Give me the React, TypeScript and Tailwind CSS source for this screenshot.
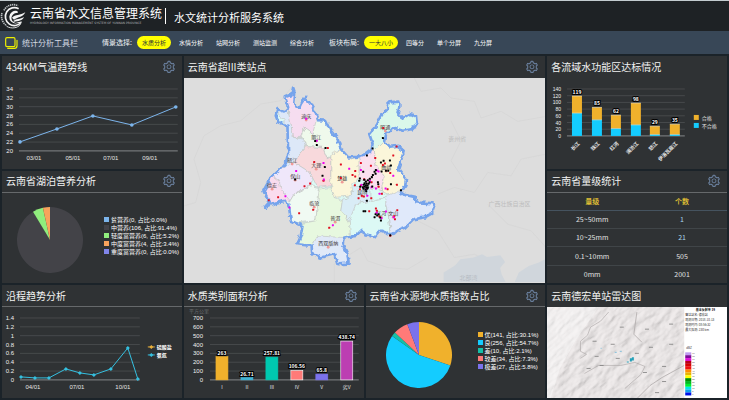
import { ReactNode } from 'react';
import { clsx } from 'clsx';
import { AiOutlineSetting } from 'react-icons/ai';

type Point = [number, number];

const analysisTabs = ['水质分析', '水情分析', '站网分析', '测站监测', '综合分析'];
const layoutTabs = ['一大八小', '四等分', '单个分屏', '九分屏'];

const lakeNutrition = [
  { label: '贫营养(0, 占比:0.0%)', value: 0, color: '#7cb5ec' },
  { label: '中营养(106, 占比:91.4%)', value: 106, color: '#434348' },
  { label: '轻度富营养(6, 占比:5.2%)', value: 6, color: '#90ed7d' },
  { label: '中度富营养(4, 占比:3.4%)', value: 4, color: '#f7a35c' },
  { label: '重度富营养(0, 占比:0.0%)', value: 0, color: '#8085e9' },
];

const waterSource = [
  { label: '优(141, 占比:30.1%)', value: 141, color: '#f0b12c' },
  { label: '良(256, 占比:54.7%)', value: 256, color: '#14ccff' },
  { label: '差(10, 占比:2.1%)', value: 10, color: '#14c0a8' },
  { label: '较差(34, 占比:7.3%)', value: 34, color: '#ff7a78' },
  { label: '极差(27, 占比:5.8%)', value: 27, color: '#7b72ec' },
];

const areaBars = [
  { label: 'I', value: 263, color: '#f0b12c', edge: '#f0b12c' },
  { label: 'II', value: 26.71, color: '#3fb4d6', edge: '#3fb4d6' },
  { label: 'III', value: 257.81, color: '#00c8b0', edge: '#00c8b0' },
  { label: 'IV', value: 106.56, color: '#ff7a78', edge: '#ffffff' },
  { label: 'V', value: 65.8, color: '#7b72ec', edge: '#7b72ec' },
  { label: '劣V', value: 438.74, color: '#bc3eb2', edge: '#ffffff' },
];

const basinBars = [
  { label: '长江', total: 119, fail: 68 },
  { label: '珠江', total: 85, fail: 48 },
  { label: '红河', total: 62, fail: 22 },
  { label: '澜沧江', total: 98, fail: 33 },
  { label: '怒江', total: 29, fail: 4 },
  { label: '伊洛瓦底江', total: 35, fail: 4 },
];

const rainRows = [
  { level: '25~50mm', count: 1, blue: true },
  { level: '10~25mm', count: 21, blue: true },
  { level: '0.1~10mm', count: 505, blue: false },
  { level: '0mm', count: 2001, blue: false },
];

function Panel({ title, gear, line, className, children }: {
  title: string;
  gear?: boolean;
  line?: boolean;
  className?: string;
  children: ReactNode;
}) {
  return (
    <section className={clsx('flex min-w-0 flex-col bg-[#2f3234]', className)}>
      <header className={clsx('flex h-[22px] shrink-0 items-center justify-between border-b pl-1 pr-[6px]', line ? 'border-[#66696b]' : 'border-transparent')}>
        <h2 className="whitespace-nowrap text-[10px] leading-none text-[#f2f2f2]">{title}</h2>
        {gear && (
          <button aria-label="设置" className="text-[#6d84a3]">
            <AiOutlineSetting className="size-[14px]" />
          </button>
        )}
      </header>
      {children}
    </section>
  );
}

function TabGroup({ label, tabs }: { label: string; tabs: string[] }) {
  return (
    <div className="flex items-center">
      <span className="mr-[5px] whitespace-nowrap text-[7px] text-[#eef1f4]">{label}</span>
      <div className="flex gap-[3px]">
        {tabs.map((tab, i) => (
          <button
            key={tab}
            className={clsx('h-[13px] whitespace-nowrap rounded-full px-[5px] text-[6px] leading-none', i === 0 ? 'bg-[#ffff00] text-[#2b3036]' : 'text-white')}
          >
            {tab}
          </button>
        ))}
      </div>
    </div>
  );
}

function Grid({ labels, labelX, x1, x2, top, bottom, dense }: {
  labels: string[];
  labelX: number;
  x1: number;
  x2: number;
  top: number;
  bottom: number;
  dense?: boolean;
}) {
  const step = (bottom - top) / (labels.length - 1);
  return (
    <g>
      {labels.map((label, i) => (
        <g key={label}>
          <line x1={x1} x2={x2} y1={top + i * step} y2={top + i * step} stroke={i === labels.length - 1 ? '#85888a' : '#46494b'} strokeWidth="1" />
          <text
            x={labelX}
            y={top + i * step + 2}
            textAnchor="end"
            className={clsx("fill-[#f0f0f0] font-['Liberation_Sans',sans-serif]", dense ? 'text-[5px]' : 'text-[6px]')}
          >
            {label}
          </text>
        </g>
      ))}
    </g>
  );
}

function TempChart() {
  const points: Point[] = [[18, 64], [55, 51], [91, 38], [130, 47], [174, 29]];
  const months = [{ t: '03/01', x: 32 }, { t: '05/01', x: 71 }, { t: '07/01', x: 109 }, { t: '09/01', x: 148 }];
  return (
    <svg viewBox="0 0 180 90" className="block w-full">
      <Grid labels={['34', '32', '30', '28', '26', '24', '22', '20']} labelX={11} x1={17} x2={176} top={11} bottom={73} />
      <polyline points={points.join(' ')} fill="none" stroke="#7cb5ec" strokeWidth="1" />
      {points.map(([x, y]) => <circle key={x} cx={x} cy={y} r="1.8" fill="#7cb5ec" />)}
      {months.map((m) => <text key={m.t} x={m.x} y="82" textAnchor="middle" className="fill-[#e6e6e6] font-['Liberation_Sans',sans-serif] text-[6px]">{m.t}</text>)}
    </svg>
  );
}

function TrendChart() {
  const points: Point[] = [[19, 70], [33, 71], [47, 71], [64, 62], [78, 66], [92, 68], [109, 62], [126, 41], [136, 72]];
  const months = [{ t: '04/01', x: 31 }, { t: '07/01', x: 75 }, { t: '10/01', x: 121 }];
  const legend = [{ t: '硫酸盐', y: 40, color: '#e8b03c' }, { t: '氨氮', y: 48, color: '#35c0e0' }];
  return (
    <svg viewBox="0 0 180 90" className="block w-full">
      <Grid labels={['1.4', '1.2', '1', '0.8', '0.6', '0.4', '0.2', '0']} labelX={12} x1={18} x2={138} top={11} bottom={73} />
      <polyline points={points.join(' ')} fill="none" stroke="#35c0e0" strokeWidth="1" />
      {points.map(([x, y]) => <path key={x} d={`M${x - 2} ${y}l2-2 2 2-2 2z`} fill="#35c0e0" />)}
      {months.map((m) => <text key={m.t} x={m.x} y="82" textAnchor="middle" className="fill-[#e6e6e6] font-['Liberation_Sans',sans-serif] text-[6px]">{m.t}</text>)}
      {legend.map((l) => (
        <g key={l.t}>
          <path d={`M146 ${l.y}h7`} stroke={l.color} />
          <path d={`M147.500 ${l.y}l2-2 2 2-2 2z`} fill={l.color} />
          <text x="155" y={l.y + 2} className="fill-white text-[5px] font-bold">{l.t}</text>
        </g>
      ))}
    </svg>
  );
}

function AreaChart() {
  const base = 73;
  return (
    <svg viewBox="0 0 180 90" className="block w-full">
      <text x="5" y="6" className="fill-[#66696b] text-[5px]">平方公里</text>
      <Grid labels={['700', '600', '500', '400', '300', '200', '100', '0']} labelX={19} x1={26} x2={175} top={11} bottom={base} />
      {areaBars.map((bar, i) => {
        const h = (bar.value / 700) * 62;
        const x = 32 + i * 25;
        return (
          <g key={bar.label}>
            <rect x={x} y={base - h} width="12" height={h} fill={bar.color} stroke={bar.edge} strokeWidth="0.6" />
            <text x={x + 6} y={base - h - 2} textAnchor="middle" stroke="#000" strokeWidth="2" paintOrder="stroke" className="fill-white text-[5px] font-bold">{bar.value}</text>
            <text x={x + 6} y="82" textAnchor="middle" className="fill-[#e6e6e6] text-[5px]">{bar.label}</text>
          </g>
        );
      })}
    </svg>
  );
}

function BasinChart() {
  const base = 58;
  const scale = 47 / 140;
  return (
    <svg viewBox="0 0 180 90" className="block w-full">
      <Grid dense labels={['140', '120', '100', '80', '60', '40', '20', '0']} labelX={14} x1={20} x2={138} top={11} bottom={base} />
      {basinBars.map((bar, i) => {
        const x = 25 + Math.round(i * 19.6);
        const top = base - bar.total * scale;
        const split = base - bar.fail * scale;
        return (
          <g key={bar.label}>
            <rect x={x} y={top} width="10" height={split - top} fill="#f0b12c" />
            <rect x={x} y={split} width="10" height={base - split} fill="#14ccff" />
            <path d={`M${x} ${split}h10M${x} ${top}h10`} stroke="#f4e9c8" strokeWidth="0.6" />
            <text x={x + 5} y={top - 2} textAnchor="middle" stroke="#000" strokeWidth="2" paintOrder="stroke" className="fill-white text-[5px] font-bold">{bar.total}</text>
            <text transform={`translate(${x + 8} 66) rotate(-45)`} textAnchor="end" className="fill-[#e6e6e6] text-[5px] font-bold">{bar.label}</text>
          </g>
        );
      })}
      <rect x="147" y="37" width="5" height="5" fill="#f0b12c" />
      <text x="155" y="42" className="fill-[#e6e6e6] text-[5px]">合格</text>
      <rect x="147" y="45" width="5" height="5" fill="#14ccff" />
      <text x="155" y="50" className="fill-[#e6e6e6] text-[5px]">不合格</text>
    </svg>
  );
}

function Pie({ data, className }: { data: typeof waterSource; className: string }) {
  const total = data.reduce((sum, d) => sum + d.value, 0);
  let angle = 0;
  const slices = data.filter((d) => d.value > 0).map((d) => {
    const start = angle;
    angle += (d.value / total) * Math.PI * 2;
    const p = (a: number) => `${33 + 33 * Math.sin(a)} ${33 - 33 * Math.cos(a)}`;
    return { color: d.color, path: `M33 33L${p(start)}A33 33 0 ${angle - start > Math.PI ? 1 : 0} 1 ${p(angle)}Z` };
  });
  return (
    <div className={clsx('flex flex-1 items-center pt-1', className)}>
      <svg viewBox="0 0 66 66" className="w-[66px] shrink-0">
        {slices.map((s) => <path key={s.color} d={s.path} fill={s.color} />)}
      </svg>
      <ul className="-mt-2">
        {data.map((d) => (
          <li key={d.label} className="flex h-2 items-center gap-[2px]">
            <svg viewBox="0 0 5 5" className="size-[5px] shrink-0"><rect width="5" height="5" fill={d.color} /></svg>
            <span className="whitespace-nowrap font-['Liberation_Sans','Noto_Sans_CJK_SC',sans-serif] text-[6px] leading-none text-white">{d.label}</span>
          </li>
        ))}
      </ul>
    </div>
  );
}

// prefecture shapes overlap the border and are cut by the province outline
const province =
  '327,101 333,118 330,150 345,162 350,150 362,132 380,150 392,172 402,198 425,200 440,230 460,255 470,285 492,310 520,308 545,300 562,287 565,268 555,240 575,215 590,185 610,165 612,145 645,143 645,160 640,178 655,192 675,180 695,185 697,205 685,225 655,230 630,222 605,240 602,268 620,278 640,275 658,290 650,320 642,345 665,375 663,395 650,415 660,422 690,428 700,445 745,447 750,460 742,478 720,490 690,495 665,520 640,530 625,540 610,540 598,530 585,530 570,548 545,540 530,530 515,545 480,550 475,570 490,600 493,628 460,630 450,600 430,605 410,610 385,600 382,575 340,570 350,545 355,515 320,500 315,460 305,440 275,445 243,458 255,445 238,410 260,370 285,350 305,325 312,300 310,215 283,205 275,185 280,165 300,172 312,160 302,130 322,122';

const prefectures = [
  { color: '#f6ddf0', points: '300,90 345,90 385,130 400,200 385,240 360,220 350,250 328,250 315,190' },
  { color: '#dde8f8', points: '265,150 310,160 328,250 358,255 365,275 345,300 330,340 290,350 300,200' },
  { color: '#eff9ec', points: '400,185 470,230 490,300 440,300 430,315 415,280 365,278 358,255 350,250 360,220 385,240' },
  { color: '#f8d9dc', points: '365,278 415,280 430,315 440,305 440,395 400,400 385,370 370,350 330,325 345,300' },
  { color: '#efe7fa', points: '330,325 370,350 385,370 380,395 330,420 318,440 290,450 285,380 255,360' },
  { color: '#fadcee', points: '230,380 265,365 285,380 290,405 318,440 230,470' },
  { color: '#f0faf3', points: '318,440 330,420 380,395 405,400 410,430 400,460 395,500 300,510 300,440' },
  { color: '#fbf6da', points: '440,300 475,285 500,315 525,305 525,370 500,395 505,425 450,430 440,390' },
  { color: '#e7f8df', points: '405,405 440,400 450,430 475,440 470,470 495,500 505,530 480,560 400,545 380,575 330,580 340,510 395,500' },
  { color: '#e0e9f8', points: '380,575 400,545 475,550 510,640 370,630' },
  { color: '#fae0ee', points: '525,290 570,285 575,330 600,370 590,410 560,400 540,380 525,370' },
  { color: '#d9ecf6', points: '475,435 505,425 505,395 560,400 560,440 520,450 515,490 495,500 470,470' },
  { color: '#dcf9f5', points: '515,450 560,440 600,430 610,460 620,560 500,560 495,500' },
  { color: '#fbf6da', points: '570,285 600,240 680,260 680,420 620,425 590,410 600,370 575,330' },
  { color: '#e0e9fa', points: '600,430 650,410 770,420 770,510 620,555 610,460' },
  { color: '#dbf8ea', points: '540,220 600,130 720,160 710,240 605,240 600,260 570,290 550,280' },
];

const cities = [
  { t: '迪庆', x: 122, y: 40 },
  { t: '丽江', x: 132, y: 61 },
  { t: '怒江', x: 108, y: 84 },
  { t: '大理', x: 132, y: 89 },
  { t: '保山', x: 111, y: 100 },
  { t: '德宏', x: 88, y: 109 },
  { t: '楚雄', x: 158, y: 102 },
  { t: '昆明', x: 178, y: 116 },
  { t: '临沧', x: 130, y: 127 },
  { t: '普洱', x: 151, y: 142 },
  { t: '西双版纳', x: 144, y: 167 },
  { t: '昭通', x: 201, y: 51 },
  { t: '曲靖', x: 202, y: 91 },
  { t: '红河', x: 197, y: 137 },
  { t: '文山', x: 209, y: 137 },
];

const stations: { color: string; points: Point[] }[] = [
  {
    color: '#e01020',
    points: [[431, 282], [390, 324], [470, 331], [378, 388], [361, 396], [418, 380], [282, 429], [254, 438], [345, 477], [387, 467], [435, 521], [637, 277], [627, 304], [573, 312], [530, 327], [560, 335], [513, 351], [505, 363], [513, 367], [470, 372], [512, 393], [527, 405], [523, 432], [533, 425], [539, 427], [561, 432], [562, 384], [583, 398], [593, 419], [610, 405], [638, 392], [618, 357], [602, 328], [596, 333], [555, 471], [575, 463], [578, 470], [585, 487], [639, 468], [630, 486], [632, 495], [597, 222], [618, 545], [530, 394], [540, 375]],
  },
  {
    color: '#f000f0',
    points: [[398, 260], [418, 327], [336, 351], [419, 376], [304, 426], [316, 460], [446, 513], [495, 344], [530, 348], [366, 194], [578, 349], [583, 352], [627, 365], [557, 380], [562, 399], [575, 403], [604, 403], [586, 419], [549, 425], [605, 472], [592, 492], [628, 489], [577, 476], [545, 405], [532, 392]],
  },
  {
    color: '#000000',
    points: [[393, 261], [398, 273], [424, 282], [422, 339], [415, 365], [333, 376], [548, 304], [565, 283], [596, 252], [598, 320], [617, 319], [620, 334], [612, 350], [605, 350], [592, 352], [590, 325], [537, 353], [575, 348], [571, 353], [574, 359], [566, 363], [563, 369], [557, 374], [527, 373], [525, 380], [540, 377], [551, 378], [545, 382], [541, 387], [547, 388], [553, 389], [539, 392], [545, 393], [550, 394], [556, 384], [536, 399], [541, 398], [546, 399], [551, 400], [538, 404], [544, 406], [549, 404], [546, 411], [528, 398], [564, 397], [581, 384], [582, 390], [620, 390], [650, 408], [548, 440], [538, 471], [543, 471], [574, 480], [579, 484], [583, 480], [571, 489], [588, 490], [590, 499], [618, 543]],
  },
];

function StationMap() {
  return (
    <div className="flex-1 overflow-hidden bg-[#dddddd]">
      <svg viewBox="0 0 361 204" preserveAspectRatio="xMidYMid slice" className="block w-full">
        <defs>
          <filter id="rough" x="-5%" y="-5%" width="110%" height="110%">
            <feTurbulence type="fractalNoise" baseFrequency="0.2" numOctaves="2" seed="4" />
            <feDisplacementMap in="SourceGraphic" scale="5" xChannelSelector="R" yChannelSelector="G" />
          </filter>
          <clipPath id="province"><polygon points={province} /></clipPath>
        </defs>
        <g transform="translate(0 -24) scale(0.3333)">
          <g fill="none" stroke="#d5d5d5" strokeWidth="2">
            <path d="M0 455l35-10 15-60-20-70 30-70 50-30 60-15 60-50 60-10 40-50" />
            <path d="M690 72l20 40 60-10 30 30 70 10 20 50 60-20 50 30 85-15" />
            <path d="M760 420l50-20 60 15 40-60 70 10 30-50 75-15M700 500l60 30 50 80 60-10 60 30" />
            <path d="M450 690l0-60 80-50 20 40 60 20 60 5 60-35" />
            <path d="M910 450l60 60 70 20 45 50M800 200l30 60-30 60 40 60" />
          </g>
          <path d="M778 690l0-35 35-22 15-18 40-5 25-10 15 8 40-5 14 20-15 18 5 20 15 29zM988 690l15-35 30-20 30-10 22-12v77z" fill="#d0d6dc" />
        </g>
        <g filter="url(#rough)">
          <g transform="translate(0 -24) scale(0.3333)">
            <g clipPath="url(#province)">
              <polygon points={province} fill="#dcf9f5" />
              {prefectures.map((p) => <polygon key={p.points} points={p.points} fill={p.color} stroke="#c3c6c3" strokeWidth="2" />)}
            </g>
            <polygon points={province} fill="none" stroke="#76a4ec" strokeWidth="8" strokeLinejoin="round" />
          </g>
        </g>
        <text x="273" y="63" textAnchor="middle" className="fill-[#bdbdbd] text-[6px]">贵州省</text>
        <text x="325" y="128" textAnchor="middle" className="fill-[#bdbdbd] text-[6px]">广西壮族自治区</text>
        <text x="284" y="202" textAnchor="middle" className="fill-[#b5bbc2] text-[6px]">北部湾</text>
        {cities.map((c) => (
          <g key={c.t}>
            <circle cx={c.x} cy={c.y + 2} r="1.400" fill="#f09a96" />
            <text x={c.x} y={c.y} textAnchor="middle" className="fill-[#3c3838] text-[5px]">{c.t}</text>
          </g>
        ))}
        <g transform="translate(0 -24) scale(0.3333)">
          {stations.map((s) => s.points.map(([x, y]) => (
            <rect key={`${x}-${y}`} x={x - 3} y={y - 3} width="6" height="6" rx="1" fill={s.color} />
          )))}
        </g>
      </svg>
    </div>
  );
}

const dbzColors = ['#bf9af0', '#7a0c98', '#e010d8', '#b80018', '#d80000', '#f01010', '#ff8c00', '#e8b400', '#ffff00', '#009000', '#00b820', '#00f030', '#00e8e8', '#10a0f0', '#0010e8'];
const radarNotes = ['雷达站名: 德宏站', '观测日期: 2018-10-13', '观测时间: 08:56:32', '最大探测: 230 km'];
const radarPlaces: Point[] = [[75, 20], [48, 34], [66, 37], [100, 22], [124, 17], [104, 40], [90, 46], [50, 49], [71, 51], [42, 61], [55, 58], [117, 59], [98, 65], [117, 74], [110, 85], [124, 37]];

function RadarImage() {
  return (
    <div className="flex-1 overflow-hidden bg-white">
      <svg viewBox="0 0 180 90" preserveAspectRatio="xMidYMid slice" className="block h-full w-full">
        <defs>
          <filter id="relief" x="0" y="0" width="100%" height="100%">
            <feTurbulence type="fractalNoise" baseFrequency="0.07 0.16" numOctaves="5" seed="12" />
            <feDiffuseLighting lightingColor="#efebeb" surfaceScale="1.5" diffuseConstant="1.03">
              <feDistantLight azimuth="225" elevation="65" />
            </feDiffuseLighting>
          </filter>
          <clipPath id="terrain"><rect width="137" height="92" /></clipPath>
        </defs>
        <g clipPath="url(#terrain)">
          <g transform="rotate(-38 68 45)"><rect x="-30" y="-50" width="200" height="190" filter="url(#relief)" /></g>
          <path d="M0 0h52L30 32 14 60 4 92H0z" fill="#fff" opacity="0.4" />
          <path d="M62 5l-8 9-10 6-3 8-7 6v10l6 3-6 4M38 66l14-8 22 0 14-3 10 4-4 8-16 14" fill="none" stroke="#a8a4a4" strokeWidth="0.6" />
          <path d="M90 5l-3 22 8 8M137 58l-22 12-12 8-14 14" fill="none" stroke="#b0abab" strokeWidth="0.8" />
          {radarPlaces.map(([x, y]) => <path key={`${x}-${y}`} d={`M${x - 2} ${y}h4`} stroke="#7c7c7c" strokeWidth="0.8" />)}
          <path d="M83 51h2v-1h2v3h-2v1h-2zM80 54h2v1h-2z" fill="#25a0b8" />
          <path d="M68 45h2M73 44h2M54 41h1" stroke="#67b6d8" strokeWidth="0.8" />
        </g>
        <text x="158" y="4" textAnchor="middle" className="fill-black text-[3px] font-bold">基本反射率 19</text>
        {radarNotes.map((note, i) => <text key={note} x="138" y={9 + i * 5} className="fill-[#333333] text-[3px]">{note}</text>)}
        <text x="139" y="42" className="fill-[#444444] font-['Liberation_Sans',sans-serif] text-[3px]">dBZ</text>
        {dbzColors.map((color, i) => (
          <g key={color}>
            <rect x="138" y={45 + i * 2.85} width="6" height="2.9" fill={color} />
            <text x="145" y={47 + i * 2.85} className="fill-[#444444] font-['Liberation_Sans',sans-serif] text-[2px]">{70 - i * 5}</text>
          </g>
        ))}
      </svg>
    </div>
  );
}

function RainTable() {
  return (
    <table className="w-full flex-1 table-fixed text-center text-[7px] leading-none">
      <thead>
        <tr className="h-[18px] border-b border-[#45535f] text-[#dcbb35]">
          <th>量级</th>
          <th>个数</th>
        </tr>
      </thead>
      <tbody className="text-[#e2e2e2]">
        {rainRows.map((row) => (
          <tr key={row.level} className="h-[18px] border-b border-[#404548] last:border-0">
            <td>{row.level}</td>
            <td className={row.blue ? 'text-[#a9d8ea]' : ''}>{row.count}</td>
          </tr>
        ))}
      </tbody>
    </table>
  );
}

function Logo() {
  return (
    <svg viewBox="0 0 78 78" className="size-[26px] shrink-0" fill="none">
      <path d="M12 22a32 32 0 0 1 42-14M6 30a34 34 0 0 0 14 38" stroke="#b9bdbf" strokeWidth="5" strokeDasharray="4 2" />
      <path d="M56 17A27 27 0 1 0 64 58" stroke="#f2f2f2" strokeWidth="5" />
      <path d="M52 24A19 19 0 1 0 50 61C36 58 30 46 38 36 42 31 47 29 54 29z" fill="#f4f4f4" />
      <path d="M36 44C46 34 60 38 76 28 70 42 54 42 42 50zM40 54c10-8 20-4 32-12-4 12-18 12-30 14zM46 60c8-3 14-2 20-6-4 8-12 8-20 6z" fill="#f4f4f4" />
      <path d="M20 70c14 8 32 6 42-6" stroke="#d5d7d8" strokeWidth="3" />
    </svg>
  );
}

export default function App() {
  return (
    <div className="flex min-h-screen flex-col bg-[#1b2329] font-['Noto_Sans_CJK_SC',sans-serif]">
      <header className="flex h-[31px] items-center border-t border-[#c3ccd0] bg-[#1e2225]">
        <Logo />
        <div className="ml-1 flex flex-col gap-[3px]">
          <h1 className="whitespace-nowrap text-[12px] leading-none text-white">云南省水文信息管理系统</h1>
          <p className="whitespace-nowrap font-['DejaVu_Sans',sans-serif] text-[3px] leading-none text-[#b0b3b5]">
            HYDROLOGY INFORMATION MANAGEMENT SYSTEM OF YUNNAN PROVINCE
          </p>
        </div>
        <div className="ml-[3px] mr-2 h-4 w-px bg-white" />
        <p className="mt-[2px] whitespace-nowrap text-[11px] leading-none text-white">水文统计分析服务系统</p>
      </header>

      <nav className="flex h-[23px] items-center bg-[#384757] pl-[5px]">
        <svg viewBox="0 0 39 36" className="h-3 w-[13px] shrink-0" fill="none" stroke="#eef000" strokeWidth="3.500" strokeLinejoin="round">
          <rect x="2" y="2" width="28" height="27" rx="4" />
          <path d="M8 34h20c5 0 8-3 8-8V10" strokeLinecap="round" />
        </svg>
        <span className="ml-1 mr-6 whitespace-nowrap text-[8px] text-[#d3dbe3]">统计分析工具栏</span>
        <div className="flex gap-[10px]">
          <TabGroup label="情景选择:" tabs={analysisTabs} />
          <TabGroup label="板块布局:" tabs={layoutTabs} />
        </div>
      </nav>

      <main className="grid flex-1 auto-rows-fr grid-cols-4 gap-[2px] p-[2px]">
        <Panel title="434KM气温趋势线" gear>
          <TempChart />
        </Panel>
        <Panel title="云南省超III类站点" gear className="col-span-2 row-span-2">
          <StationMap />
        </Panel>
        <Panel title="各流域水功能区达标情况">
          <BasinChart />
        </Panel>
        <Panel title="云南省湖泊营养分析" gear line>
          <Pie data={lakeNutrition} className="gap-[21px] pl-[15px]" />
        </Panel>
        <Panel title="云南省量级统计" gear line>
          <RainTable />
        </Panel>
        <Panel title="沿程趋势分析" line>
          <TrendChart />
        </Panel>
        <Panel title="水质类别面积分析" gear line>
          <AreaChart />
        </Panel>
        <Panel title="云南省水源地水质指数占比" gear line>
          <Pie data={waterSource} className="gap-[26px] pl-5" />
        </Panel>
        <Panel title="云南德宏单站雷达图">
          <RadarImage />
        </Panel>
      </main>
    </div>
  );
}
